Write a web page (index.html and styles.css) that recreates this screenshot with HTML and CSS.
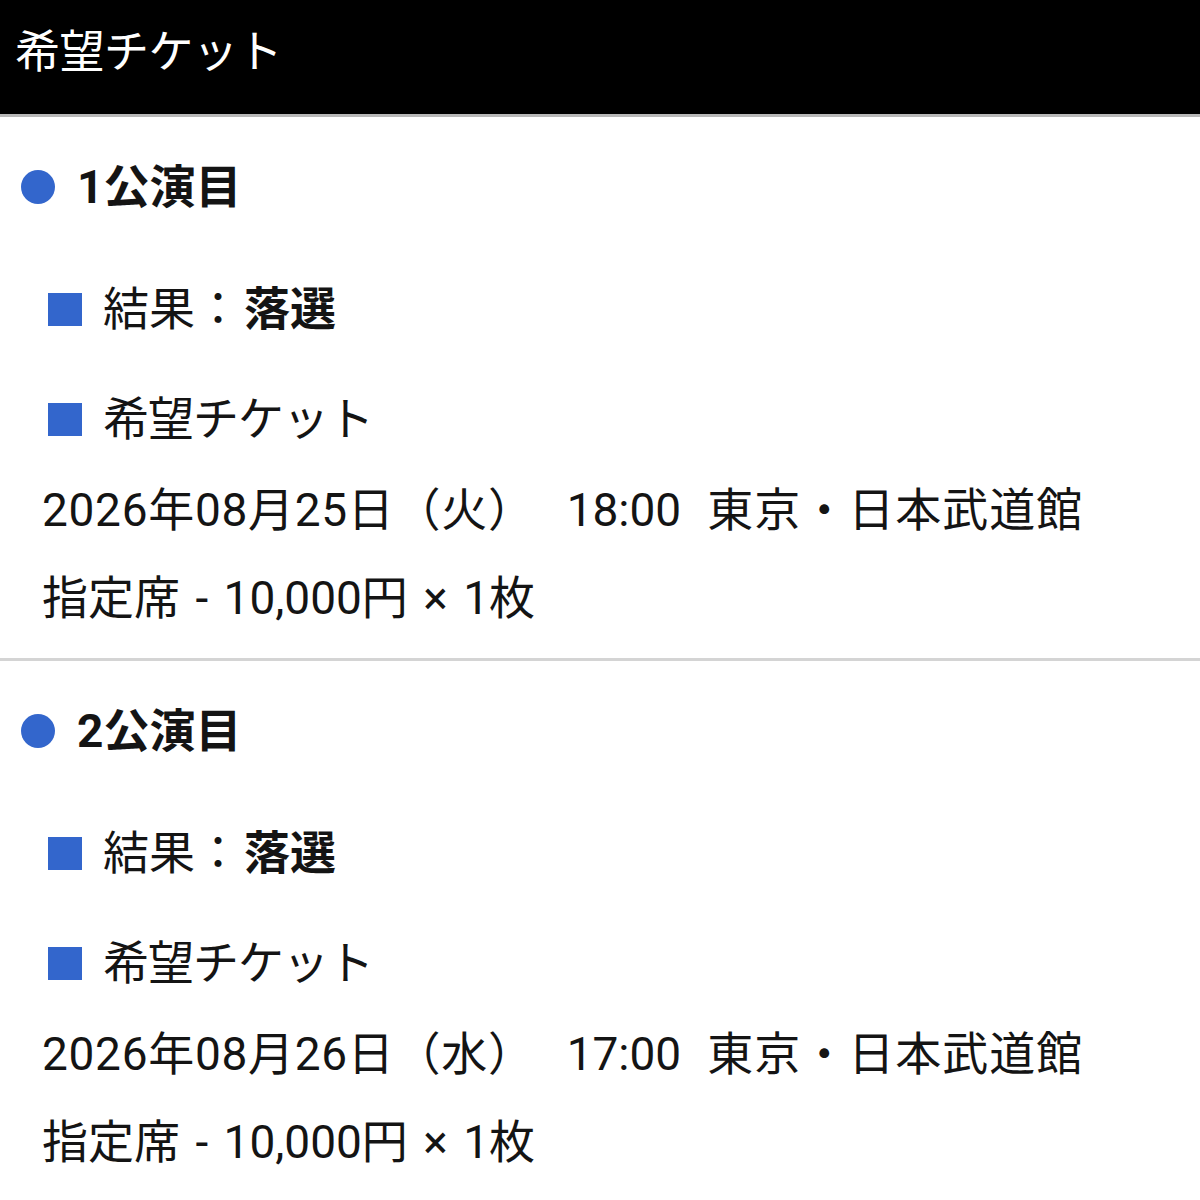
FILE: index.html
```html
<!DOCTYPE html>
<html lang="ja">
<head>
  <meta charset="UTF-8">
  <meta name="viewport" content="width=device-width, initial-scale=1">
  <title>希望チケット</title>
  <link rel="stylesheet" href="styles.css">
</head>
<body>

  <header class="app-bar">希望チケット</header>

  <section class="performance">
    <h2 class="performance-title"><span class="dot"></span>1公演目</h2>
    <p class="label"><span class="square"></span><span>結果：<strong>落選</strong></span></p>
    <p class="label label-tight"><span class="square"></span><span>希望チケット</span></p>
    <p class="detail detail-date">
      <span class="date">2026年08月25日（火）</span><span class="time">18:00</span><span class="venue">東京・日本武道館</span>
    </p>
    <p class="detail">指定席 - 10,000円 × 1枚</p>
  </section>

  <section class="performance">
    <h2 class="performance-title"><span class="dot"></span>2公演目</h2>
    <p class="label"><span class="square"></span><span>結果：<strong>落選</strong></span></p>
    <p class="label label-tight"><span class="square"></span><span>希望チケット</span></p>
    <p class="detail detail-date">
      <span class="date">2026年08月26日（水）</span><span class="time">17:00</span><span class="venue">東京・日本武道館</span>
    </p>
    <p class="detail">指定席 - 10,000円 × 1枚</p>
  </section>

</body>
</html>
```

FILE: styles.css
```css
* {
  box-sizing: border-box;
}

body {
  font-family: Roboto, "Noto Sans CJK JP", sans-serif;
  font-size: 46px;
  color: #141414;
  margin: 0;
  padding: 0;
  background: #fff;
}

.app-bar {
  height: 117px;
  padding: 0 15px 18px;
  display: flex;
  align-items: center;
  font-size: 45px;
  letter-spacing: -0.5px;
  background: #000;
  color: #fff;
  border-bottom: 3px solid #b8b8b8;
}

.performance {
  padding: 40px 0 30px;
  border-bottom: 3px solid #d4d4d4;
}

.performance:last-child {
  border-bottom: none;
}

.performance-title {
  display: flex;
  align-items: center;
  gap: 22px;
  margin: 0;
  padding-left: 21px;
  font-size: 46px;
  font-weight: 700;
  line-height: 60px;
}

.dot {
  width: 34px;
  height: 34px;
  border-radius: 50%;
  background: #3366cc;
}

.label {
  display: flex;
  align-items: center;
  gap: 21px;
  margin: 62px 0 0;
  padding-left: 48px;
  line-height: 60px;
}

.label + .label {
  margin-top: 50px;
}

.label strong {
  margin-left: 3px;
  font-weight: 700;
}

/* katakana heading reads a little tighter */
.label-tight {
  letter-spacing: -1px;
}

.square {
  width: 34px;
  height: 33px;
  background: #3366cc;
}

.detail {
  margin: 28px 0 0;
  padding-left: 42px;
  line-height: 60px;
  word-spacing: 4px;
}

.detail-date {
  margin-top: 31px;
}

.date {
  letter-spacing: 0.7px;
}

.time {
  margin-left: 32px;
}

.venue {
  margin-left: 26px;
  letter-spacing: 1px;
}
```
